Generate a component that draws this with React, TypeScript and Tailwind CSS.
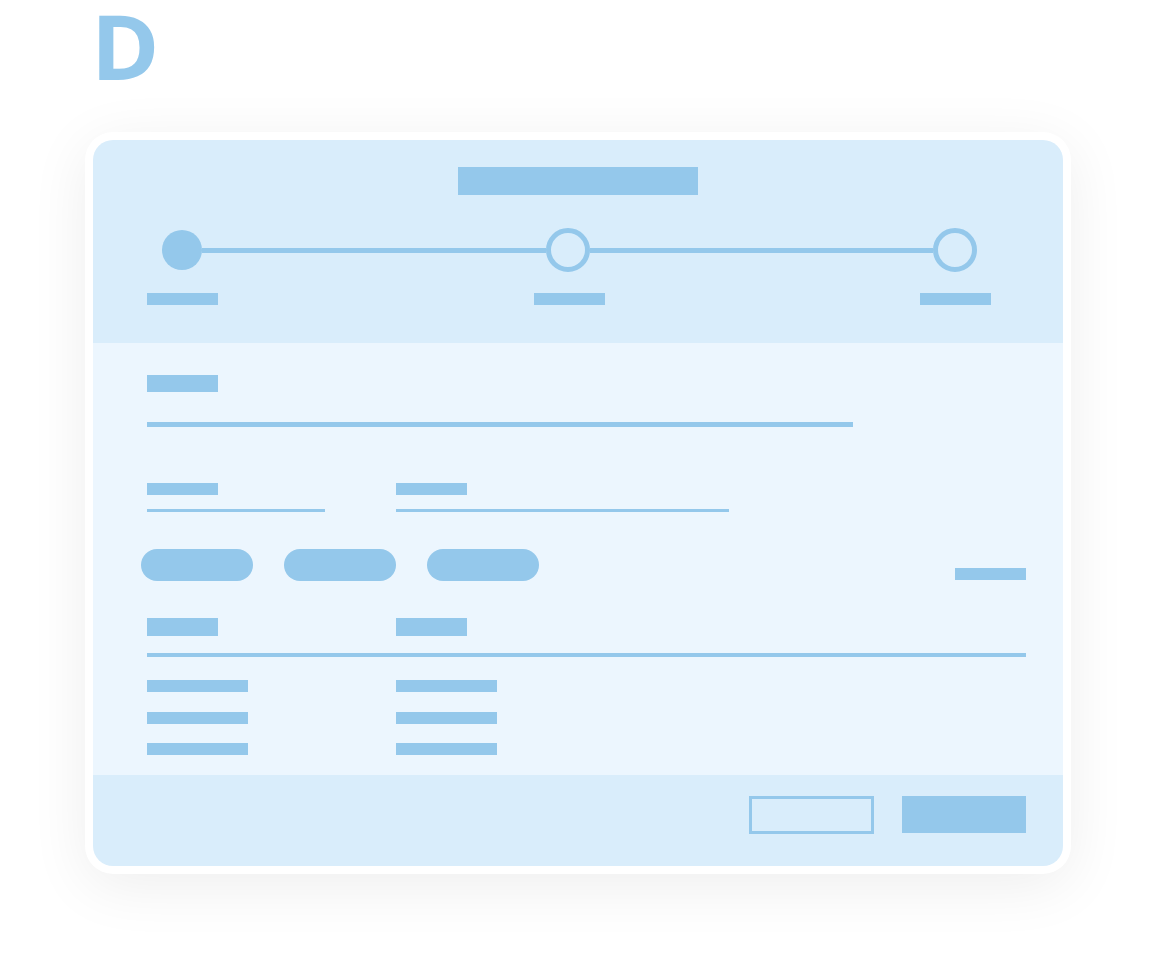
import React from "react";

const fill = "bg-[#94c8eb]";

function Bar({ w, h, className = "" }: { w: string; h: string; className?: string }) {
  return <div className={`${fill} ${w} ${h} ${className}`} />;
}

export default function App() {
  return (
    <div className="w-[1157px] h-[965px] bg-white overflow-hidden font-['Open_Sans',sans-serif]">
      <div className="pl-[91px] h-[100px] pt-[3px]">
        <span className="inline-block origin-left scale-x-[1.04] text-[89px] leading-[86px] font-bold text-[#94c8eb]">D</span>
      </div>
      <div className="ml-[85px] mt-[32px] w-[986px] rounded-[28px] bg-white p-[8px] shadow-[0_12px_60px_rgba(0,0,0,0.07)]">
        <div className="w-[970px] rounded-[20px] overflow-hidden">
          {/* Header */}
          <div className="h-[203px] bg-[#d9edfb] pt-[27px]">
            <div className="flex justify-center">
              <Bar w="w-[240px]" h="h-[28px]" />
            </div>
            <div className="mt-[33px] ml-[69px] w-[815px] flex items-center">
              <div className={`w-[40px] h-[40px] rounded-full ${fill}`} />
              <div className={`flex-1 h-[5px] ${fill}`} />
              <div className="w-[44px] h-[44px] rounded-full border-[5px] border-[#94c8eb]" />
              <div className={`flex-1 h-[5px] ${fill}`} />
              <div className="w-[44px] h-[44px] rounded-full border-[5px] border-[#94c8eb]" />
            </div>
            <div className="mt-[21px] pl-[54px] pr-[72px] flex justify-between">
              <Bar w="w-[71px]" h="h-[12px]" />
              <Bar w="w-[71px]" h="h-[12px]" />
              <Bar w="w-[71px]" h="h-[12px]" />
            </div>
          </div>
          {/* Body */}
          <div className="bg-[#ecf6fe] pl-[54px] pr-[37px] pt-[32px] pb-[20px]">
            <Bar w="w-[71px]" h="h-[17px]" />
            <Bar w="w-[706px]" h="h-[5px]" className="mt-[30px]" />
            <div className="mt-[56px] grid grid-cols-[249px_1fr]">
              <div>
                <Bar w="w-[71px]" h="h-[12px]" />
                <Bar w="w-[178px]" h="h-[3px]" className="mt-[14px]" />
              </div>
              <div>
                <Bar w="w-[71px]" h="h-[12px]" />
                <Bar w="w-[333px]" h="h-[3px]" className="mt-[14px]" />
              </div>
            </div>
            <div className="mt-[37px] -ml-[6px] flex items-end justify-between">
              <div className="flex gap-[31px]">
                <div className={`w-[112px] h-[32px] rounded-full ${fill}`} />
                <div className={`w-[112px] h-[32px] rounded-full ${fill}`} />
                <div className={`w-[112px] h-[32px] rounded-full ${fill}`} />
              </div>
              <Bar w="w-[71px]" h="h-[12px]" className="mb-[1px]" />
            </div>
            <div className="mt-[37px] grid grid-cols-[249px_1fr]">
              <Bar w="w-[71px]" h="h-[18px]" />
              <Bar w="w-[71px]" h="h-[18px]" />
            </div>
            <Bar w="w-full" h="h-[4px]" className="mt-[17px]" />
            <div className="mt-[23px] grid grid-cols-[249px_1fr]">
              <div className="flex flex-col gap-[19.5px]">
                <Bar w="w-[101px]" h="h-[12px]" />
                <Bar w="w-[101px]" h="h-[12px]" />
                <Bar w="w-[101px]" h="h-[12px]" />
              </div>
              <div className="flex flex-col gap-[19.5px]">
                <Bar w="w-[101px]" h="h-[12px]" />
                <Bar w="w-[101px]" h="h-[12px]" />
                <Bar w="w-[101px]" h="h-[12px]" />
              </div>
            </div>
          </div>
          {/* Footer */}
          <div className="h-[91px] bg-[#d9edfb] pt-[21px] pr-[37px] flex justify-end items-start gap-[28px]">
            <div className="w-[125px] h-[38px] border-[3px] border-[#94c8eb]" />
            <Bar w="w-[124px]" h="h-[37px]" />
          </div>
        </div>
      </div>
    </div>
  );
}
